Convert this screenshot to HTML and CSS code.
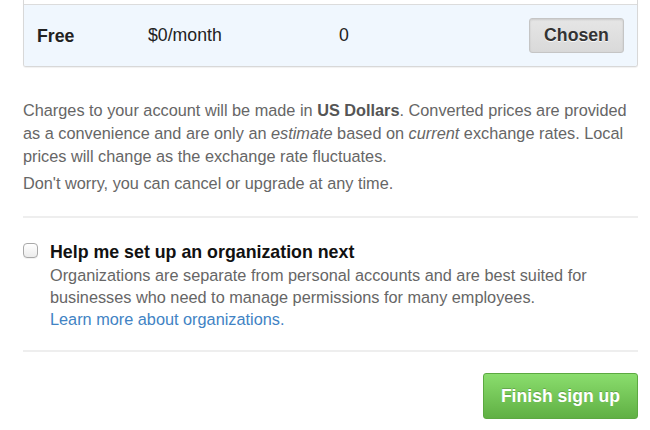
FILE: index.html
```html
<!DOCTYPE html>
<html>
<head>
<meta charset="utf-8">
<link rel="stylesheet" href="styles.css">
</head>
<body>
<div class="page">
  <div class="plans">
    <div class="plan-prev"></div>
    <div class="plan-row">
      <div class="plan-name">Free</div>
      <div class="plan-price">$0/month</div>
      <div class="plan-repos">0</div>
      <div class="plan-action"><button class="btn-chosen">Chosen</button></div>
    </div>
  </div>

  <div class="notes">
    <p>Charges to your account will be made in <strong>US Dollars</strong>. Converted prices are provided as a convenience and are only an <em>estimate</em> based on <em>current</em> exchange rates. Local prices will change as the exchange rate fluctuates.</p>
    <p>Don't worry, you can cancel or upgrade at any time.</p>
  </div>

  <hr class="rule">

  <label class="org">
    <input type="checkbox" class="org-check">
    <span class="org-body">
      <span class="org-title">Help me set up an organization next</span>
      <span class="org-desc">Organizations are separate from personal accounts and are best suited for businesses who need to manage permissions for many employees.</span>
      <a class="org-link" href="#">Learn more about organizations.</a>
    </span>
  </label>

  <hr class="rule">

  <div class="actions">
    <button class="btn-finish">Finish sign up</button>
  </div>
</div>
</body>
</html>
```

FILE: styles.css
```css
html, body {
  margin: 0;
  padding: 0;
  background: #fff;
}
body {
  font-family: "Liberation Sans", Arial, Helvetica, sans-serif;
  color: #333;
}
.page {
  width: 615px;
  margin-left: 23px;
}
.plans {
  border: 1px solid #d8d8d8;
  border-top: none;
  border-radius: 0 0 3px 3px;
  box-shadow: 0 1px 1px rgba(0,0,0,0.06);
  overflow: hidden;
}
.plan-prev {
  height: 4px;
  background: #fff;
}
.plan-row {
  display: flex;
  align-items: center;
  height: 61px;
  border-top: 1px solid #dcdcdc;
  background: #f0f7fe;
  font-size: 17.7px;
  color: #222;
}
.plan-name {
  width: 124px;
  padding-left: 13px;
  font-weight: bold;
  box-sizing: border-box;
  padding-top: 2px;
}
.plan-price {
  width: 191px;
}
.plan-repos {
  flex: 1;
}
.plan-action {
  padding-right: 13px;
}
.btn-chosen {
  font-family: inherit;
  font-size: 17.7px;
  font-weight: bold;
  color: #333;
  width: 95px;
  height: 35px;
  border: 1px solid #c5c5c5;
  border-radius: 3px;
  background: linear-gradient(#e6e6e6, #d9d9d9);
  box-shadow: inset 0 1px 2px rgba(0,0,0,0.12);
  text-shadow: 0 1px 0 rgba(255,255,255,0.8);
  padding: 0;
}
.notes {
  margin-top: 32px;
  font-size: 16.3px;
  color: #666;
  line-height: 23px;
}
.notes p {
  margin: 0 0 4px 0;
}
.notes strong {
  color: #555;
}
.rule {
  border: none;
  border-top: 2px solid #eeeeee;
  margin: 0;
}
.notes + .rule {
  margin-top: 21px;
}
.org {
  display: flex;
  align-items: flex-start;
  padding-top: 23px;
  padding-bottom: 20px;
}
.org-check {
  -webkit-appearance: none;
  appearance: none;
  margin: 2px 12px 0 0;
  width: 15px;
  height: 15px;
  flex: none;
  border: 1px solid #a9a9a9;
  border-radius: 4px;
  background: linear-gradient(#ffffff, #ececec);
  box-shadow: 0 1px 0 rgba(0,0,0,0.05);
}
.org-body {
  display: flex;
  flex-direction: column;
  font-size: 16.3px;
  line-height: 22px;
  color: #666;
}
.org-title {
  font-size: 17.8px;
  font-weight: bold;
  color: #111;
  line-height: 22px;
  margin-bottom: 1px;
}
.org-link {
  color: #4183c4;
  text-decoration: none;
}
.actions {
  display: flex;
  justify-content: flex-end;
  padding-top: 21px;
}
.btn-finish {
  font-family: inherit;
  font-size: 17.6px;
  font-weight: bold;
  color: #fff;
  width: 155px;
  height: 46px;
  border: 1px solid #5ca941;
  border-radius: 3px;
  background: linear-gradient(#8add6d, #60b044);
  text-shadow: 0 -1px 0 rgba(0,0,0,0.2);
  padding: 0;
}
```
